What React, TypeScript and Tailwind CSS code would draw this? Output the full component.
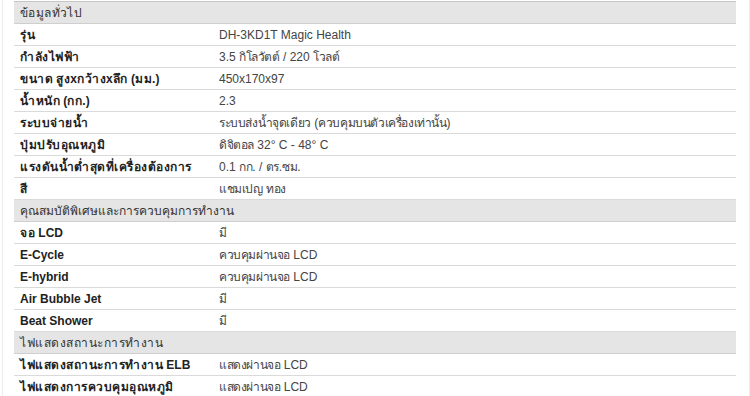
import React from "react";

type Row =
  | { type: "h"; label: string; track: string }
  | { type: "r"; label: string; value: string };

const rows: Row[] = [
  { type: "h", label: "ข้อมูลทั่วไป", track: "tracking-[0.4px]" },
  { type: "r", label: "รุ่น", value: "DH-3KD1T Magic Health" },
  { type: "r", label: "กำลังไฟฟ้า", value: "3.5 กิโลวัตต์ / 220 โวลต์" },
  { type: "r", label: "ขนาด สูงxกว้างxลึก (มม.)", value: "450x170x97" },
  { type: "r", label: "น้ำหนัก (กก.)", value: "2.3" },
  { type: "r", label: "ระบบจ่ายน้ำ", value: "ระบบส่งน้ำจุดเดียว (ควบคุมบนตัวเครื่องเท่านั้น)" },
  { type: "r", label: "ปุ่มปรับอุณหภูมิ", value: "ดิจิตอล 32° C - 48° C" },
  { type: "r", label: "แรงดันน้ำต่ำสุดที่เครื่องต้องการ", value: "0.1 กก. / ตร.ซม." },
  { type: "r", label: "สี", value: "แชมเปญ ทอง" },
  { type: "h", label: "คุณสมบัติพิเศษและการควบคุมการทำงาน", track: "tracking-[0px]" },
  { type: "r", label: "จอ LCD", value: "มี" },
  { type: "r", label: "E-Cycle", value: "ควบคุมผ่านจอ LCD" },
  { type: "r", label: "E-hybrid", value: "ควบคุมผ่านจอ LCD" },
  { type: "r", label: "Air Bubble Jet", value: "มี" },
  { type: "r", label: "Beat Shower", value: "มี" },
  { type: "h", label: "ไฟแสดงสถานะการทำงาน", track: "tracking-[0.5px]" },
  { type: "r", label: "ไฟแสดงสถานะการทำงาน ELB", value: "แสดงผ่านจอ LCD" },
  { type: "r", label: "ไฟแสดงการควบคุมอุณหภูมิ", value: "แสดงผ่านจอ LCD" },
];

function Runs({ text, thaiClass }: { text: string; thaiClass: string }) {
  const parts = text.split(/([\u0E00-\u0E7F]+)/).filter((p) => p.length > 0);
  return (
    <>
      {parts.map((p, i) =>
        /[\u0E00-\u0E7F]/.test(p) ? (
          <span key={i} className={thaiClass}>
            {p}
          </span>
        ) : (
          <span key={i}>{p}</span>
        )
      )}
    </>
  );
}

export default function App() {
  return (
    <div
      className="w-[750px] h-[396px] overflow-hidden bg-white pl-[2px]"
      style={{ fontFamily: '"Liberation Sans", Tahoma, "Noto Sans", sans-serif' }}
    >
      <div className="w-[748px] h-full border-l border-r border-[#ececec] pl-[11px] pt-[1px]">
        <div className="w-[722px] flex flex-col text-[12px]">
          {rows.map((r, i) =>
            r.type === "h" ? (
              <div
                key={i}
                className={
                  "h-[22px] flex items-center bg-[#e5e5e5] border-b border-[#cfcfcf] px-[6px] text-[#333] whitespace-pre " +
                  (i === 0 ? "h-[23px] border-t border-t-[#c6c6c6]" : "")
                }
              >
                <Runs text={r.label} thaiClass={r.track} />
              </div>
            ) : (
              <div key={i} className="h-[22px] flex items-center border-b border-[#dadada]">
                <div className="w-[199px] shrink-0 px-[6px] font-bold text-[#222] whitespace-pre">
                  <Runs text={r.label} thaiClass="tracking-[0.5px]" />
                </div>
                <div className="px-[6px] text-[#444] whitespace-pre">
                  <Runs text={r.value} thaiClass="tracking-[-0.4px]" />
                </div>
              </div>
            )
          )}
        </div>
      </div>
    </div>
  );
}
